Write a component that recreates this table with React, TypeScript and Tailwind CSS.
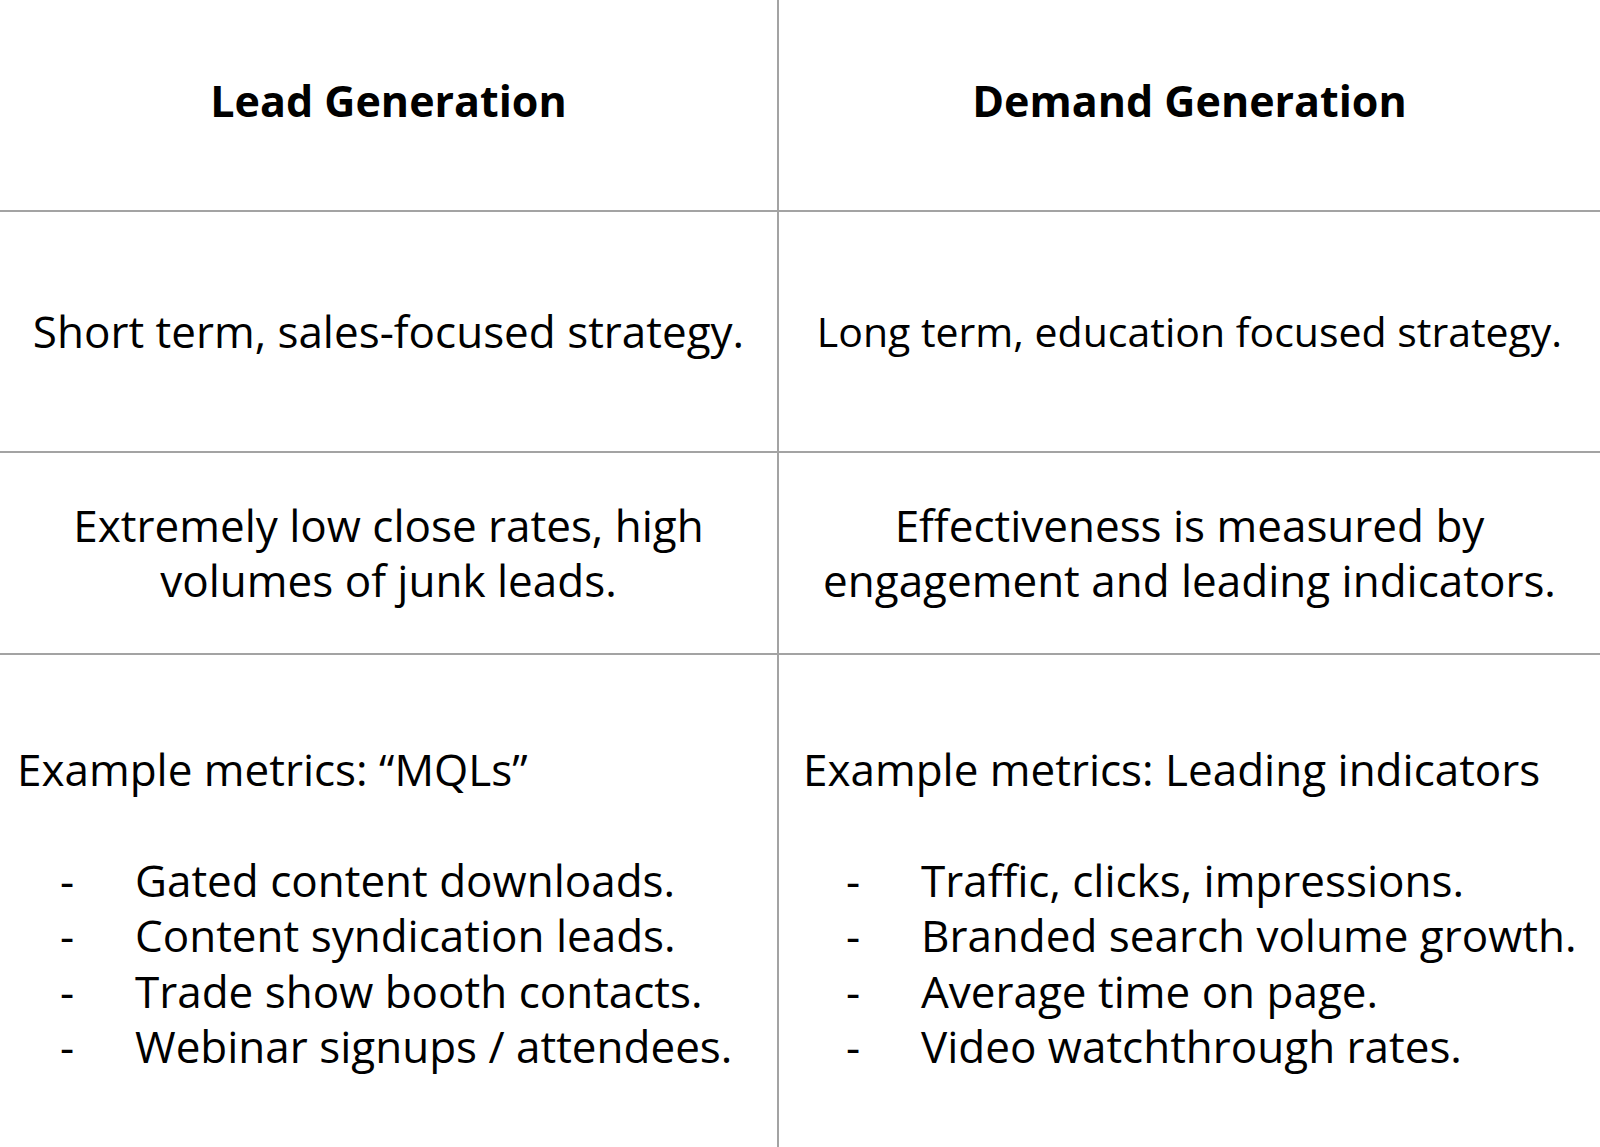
import React from "react";

const leadItems = [
	"Gated content downloads.",
	"Content syndication leads.",
	"Trade show booth contacts.",
	"Webinar signups / attendees.",
];

const demandItems = [
	"Traffic, clicks, impressions.",
	"Branded search volume growth.",
	"Average time on page.",
	"Video watchthrough rates.",
];

const MetricList: React.FC<{ title: string; items: string[] }> = ({ title, items }) => {
	return (
		<div className="flex flex-col">
			<p>{title}</p>
			<p>&nbsp;</p>
			<ul>
				{items.map((item, index) => (
					<li key={index} className="flex">
						<span className="w-[118px] pl-[43px]">-</span>
						<span>{item}</span>
					</li>
				))}
			</ul>
		</div>
	);
};

const App: React.FC = () => {
	return (
		<div
			className="w-[1600px] h-[1147px] bg-white text-black text-[44px] leading-[55.5px] overflow-hidden"
			style={{ fontFamily: "'Open Sans', 'Liberation Sans', sans-serif" }}
		>
			<div className="grid grid-cols-[779px_821px] grid-rows-[212px_241px_202px_492px] h-full">
				{/* header row */}
				<div className="flex items-center justify-center border-r-2 border-b-2 border-[#a3a3a3] pb-2">
					<h2 className="font-bold text-[43px]">Lead Generation</h2>
				</div>
				<div className="flex items-center justify-center border-b-2 border-[#a3a3a3] pb-2">
					<h2 className="font-bold text-[43px]">Demand Generation</h2>
				</div>

				{/* strategy */}
				<div className="flex items-center justify-center text-center border-r-2 border-b-2 border-[#a3a3a3]">
					<p>Short term, sales-focused strategy.</p>
				</div>
				<div className="flex items-center justify-center text-center border-b-2 border-[#a3a3a3]">
					<p className="text-[41px]">Long term, education focused strategy.</p>
				</div>

				{/* measurement */}
				<div className="flex items-center justify-center text-center border-r-2 border-b-2 border-[#a3a3a3]">
					<p>
						Extremely low close rates, high
						<br />
						volumes of junk leads.
					</p>
				</div>
				<div className="flex items-center justify-center text-center border-b-2 border-[#a3a3a3]">
					<p>
						Effectiveness is measured by
						<br />
						engagement and leading indicators.
					</p>
				</div>

				{/* metrics */}
				<div className="flex items-center pl-[17px] pt-[14px] border-r-2 border-[#a3a3a3]">
					<MetricList title="Example metrics: “MQLs”" items={leadItems} />
				</div>
				<div className="flex items-center pl-[24px] pt-[14px]">
					<MetricList title="Example metrics: Leading indicators" items={demandItems} />
				</div>
			</div>
		</div>
	);
};

export default App;
